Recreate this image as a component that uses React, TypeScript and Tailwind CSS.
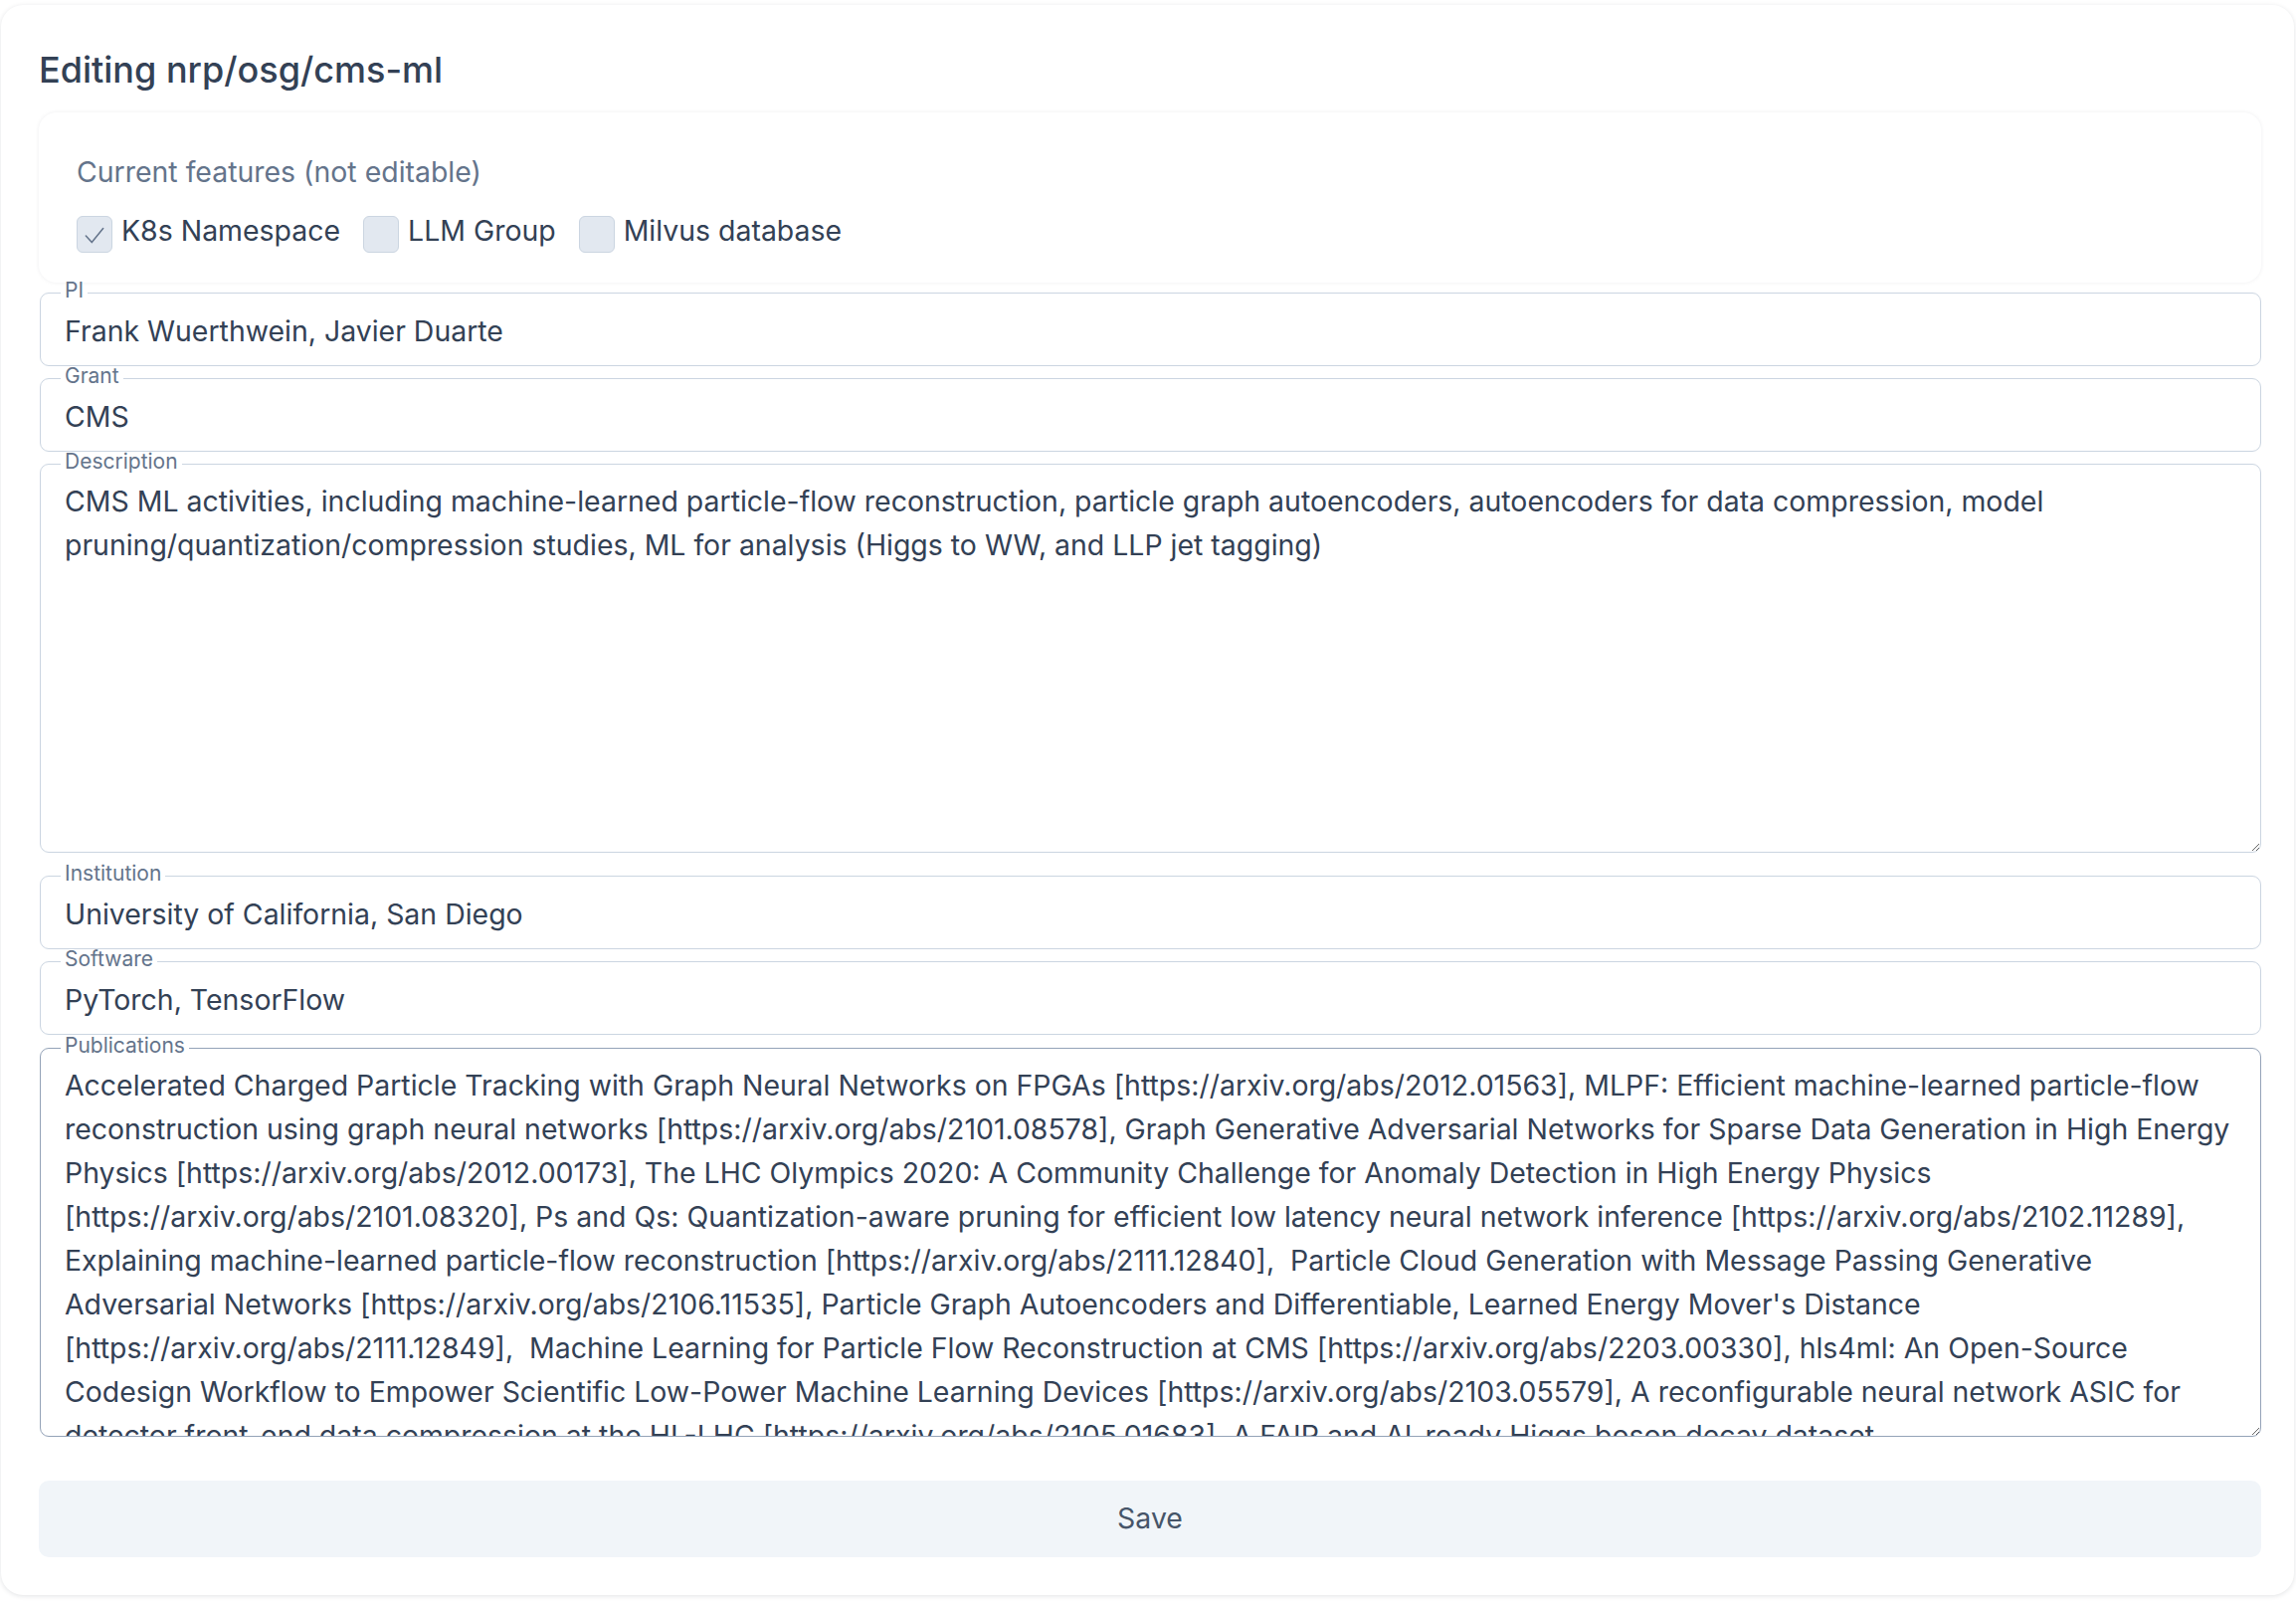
import { useState } from 'react';

const DESCRIPTION =
  'CMS ML activities, including machine-learned particle-flow reconstruction, particle graph autoencoders, autoencoders for data compression, model pruning/quantization/compression studies, ML for analysis (Higgs to WW, and LLP jet tagging)';

const PUBLICATIONS =
  "Accelerated Charged Particle Tracking with Graph Neural Networks on FPGAs [https://arxiv.org/abs/2012.01563], MLPF: Efficient machine-learned particle-flow reconstruction using graph neural networks [https://arxiv.org/abs/2101.08578], Graph Generative Adversarial Networks for Sparse Data Generation in High Energy Physics [https://arxiv.org/abs/2012.00173], The LHC Olympics 2020: A Community Challenge for Anomaly Detection in High Energy Physics [https://arxiv.org/abs/2101.08320], Ps and Qs: Quantization-aware pruning for efficient low latency neural network inference [https://arxiv.org/abs/2102.11289], Explaining machine-learned particle-flow reconstruction [https://arxiv.org/abs/2111.12840],  Particle Cloud Generation with Message Passing Generative Adversarial Networks [https://arxiv.org/abs/2106.11535], Particle Graph Autoencoders and Differentiable, Learned Energy Mover's Distance [https://arxiv.org/abs/2111.12849],  Machine Learning for Particle Flow Reconstruction at CMS [https://arxiv.org/abs/2203.00330], hls4ml: An Open-Source Codesign Workflow to Empower Scientific Low-Power Machine Learning Devices [https://arxiv.org/abs/2103.05579], A reconfigurable neural network ASIC for detector front-end data compression at the HL-LHC [https://arxiv.org/abs/2105.01683], A FAIR and AI-ready Higgs boson decay dataset [https://arxiv.org/abs/2108.02214]";

function Feature({ label, checked }: { label: string; checked: boolean }) {
  return (
    <label className="flex items-start gap-[9px]">
      <span className="mt-[7px] flex h-[37px] w-[36px] items-center justify-center rounded-[6px] border border-[#cbd5e1] bg-[#e2e8f0]">
        {checked && (
          <svg width="26" height="26" viewBox="0 0 24 24" fill="none">
            <polyline points="4,13 9.5,19 20,6" stroke="#64748b" strokeWidth="1.4" strokeLinecap="round" strokeLinejoin="round" />
          </svg>
        )}
      </span>
      <span className="text-[28.45px] leading-[44px] text-[#334155]">{label}</span>
    </label>
  );
}

function Legend({ children }: { children: string }) {
  return <legend className="ml-[20px] px-[4px] pb-[4px] text-[21px] leading-[24px] text-[#64748b]">{children}</legend>;
}

function TextField({ label, value }: { label: string; value: string }) {
  const [v, setV] = useState(value);
  return (
    <fieldset className="-mb-[2px] rounded-[9px] border border-[#cbd5e1] pb-[11px]">
      <Legend>{label}</Legend>
      <input
        value={v}
        onChange={(e) => setV(e.target.value)}
        className="block h-[48px] w-full bg-transparent px-[24px] text-[28.45px] text-[#334155] outline-none"
      />
    </fieldset>
  );
}

function AreaField({ label, value, focused }: { label: string; value: string; focused?: boolean }) {
  const [v, setV] = useState(value);
  return (
    <fieldset className={`-mb-[2px] rounded-[9px] border ${focused ? 'border-[#94a3b8]' : 'border-[#cbd5e1]'}`}>
      <Legend>{label}</Legend>
      <textarea
        value={v}
        onChange={(e) => setV(e.target.value)}
        className="block h-[376px] w-full resize-y overflow-hidden bg-transparent px-[24px] pt-[2px] text-[28.45px] leading-[44px] text-[#334155] outline-none"
      />
    </fieldset>
  );
}

export default function App() {
  return (
    <main className="min-h-screen bg-white pt-[5px] pr-[2px] pb-[5px] pl-[1px] font-['Inter','Noto_Sans',sans-serif]">
      <div className="rounded-[22px] bg-white pt-[43px] pr-[33px] pb-[38px] pl-[38px] shadow-[0_1px_5px_rgba(15,23,42,0.12)]">
        <h1 className="mb-[21px] text-[36px] leading-[44px] font-medium text-[#334155]">Editing nrp/osg/cms-ml</h1>

        <div className="rounded-[18px] bg-white px-[38px] pt-[38px] pb-[30px] shadow-[0_0_4px_rgba(15,23,42,0.07)]">
          <p className="text-[28.45px] leading-[44px] text-[#64748b]">Current features (not editable)</p>
          <div className="mt-[15px] flex gap-[23px]">
            <Feature label="K8s Namespace" checked />
            <Feature label="LLM Group" checked={false} />
            <Feature label="Milvus database" checked={false} />
          </div>
        </div>

        <div className="-mt-[4px] ml-px flex flex-col">
          <TextField label="PI" value="Frank Wuerthwein, Javier Duarte" />
          <TextField label="Grant" value="CMS" />
          <AreaField label="Description" value={DESCRIPTION} />
          <div className="mt-[11px]">
            <TextField label="Institution" value="University of California, San Diego" />
          </div>
          <TextField label="Software" value="PyTorch, TensorFlow" />
          <div className="mt-px">
            <AreaField label="Publications" value={PUBLICATIONS} focused />
          </div>
        </div>

        <button className="mt-[46px] h-[77px] w-full rounded-[10px] bg-[#f1f5f9] text-[28.45px] text-[#475569]">Save</button>
      </div>
    </main>
  );
}
